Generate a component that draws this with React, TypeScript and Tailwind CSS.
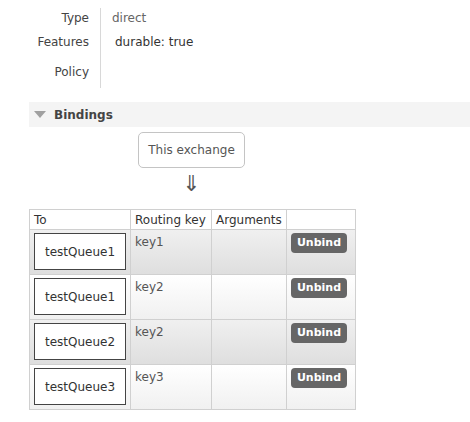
import { Fragment } from "react";

const props = [
  { label: "Type", value: "direct", h: "h-[20px]" },
  { label: "Features", value: "durable: true", h: "h-[28px]", indent: true },
  { label: "Policy", value: "", h: "h-[32px]" },
];

const bindings = [
  { queue: "testQueue1", key: "key1" },
  { queue: "testQueue1", key: "key2" },
  { queue: "testQueue2", key: "key2" },
  { queue: "testQueue3", key: "key3" },
];

const App = () => {
  return (
    <main className="w-[470px] h-[422px] overflow-hidden bg-white text-[12px] text-[#484848] font-['DejaVu_Sans',Verdana,sans-serif]">
      {/* exchange details */}
      <div className="grid grid-cols-[101px_1fr] mt-[8px] w-[300px]">
        {props.map((p) => (
          <Fragment key={p.label}>
            <div
              className={`${p.h} flex items-center justify-end pr-[11px] border-r border-[#d8d8d8] text-[#444]`}
            >
              {p.label}
            </div>
            <div className={`${p.h} flex items-center ${p.indent ? "pl-[14px] text-[#333]" : "pl-[11px] text-[#666]"}`}>
              {p.value}
            </div>
          </Fragment>
        ))}
      </div>

      {/* section header */}
      <div className="ml-[29px] mt-[14px] h-[25px] flex items-center bg-[#f4f4f4]">
        <svg width="12" height="7" viewBox="0 0 12 7" className="ml-[5px]">
          <path d="M0 0 L12 0 L6 7 Z" fill="#a0a0a0" />
        </svg>
        <span className="ml-[8px] font-bold text-[12px] text-[#444]">Bindings</span>
      </div>

      <div className="ml-[138px] mt-[5px] flex flex-col items-center w-[107px]">
        <div className="w-[107px] h-[36px] flex items-center justify-center border border-[#c4c4c4] rounded-[5px] text-[#555]">
          This exchange
        </div>
        <div className="h-[24px] leading-[24px] mt-[4px] text-[22px] text-[#555]">⇓</div>
      </div>

      <table className="ml-[29px] mt-[13px] border-collapse table-fixed w-[326px]">
        <thead>
          <tr className="h-[20px] text-left">
            <th className="w-[101px] font-normal border border-[#d0d0d0] px-[4px] text-[#333]">To</th>
            <th className="w-[81px] font-normal border border-[#d0d0d0] px-[4px] text-[#333]">Routing key</th>
            <th className="w-[75px] font-normal border border-[#d0d0d0] px-[4px] text-[#333]">Arguments</th>
            <th className="w-[69px] font-normal border border-[#d0d0d0]"></th>
          </tr>
        </thead>
        <tbody>
          {bindings.map((b, i) => (
            <tr
              key={i}
              className={`h-[45px] align-top ${
                i % 2 === 0
                  ? "bg-gradient-to-b from-[#f0f0f0] to-[#dedede]"
                  : "bg-gradient-to-b from-[#ffffff] to-[#f0f0f0]"
              }`}
            >
              <td className="border border-[#d0d0d0] pl-[4px] pt-[3px]">
                <div className="w-[92px] h-[37px] flex items-center justify-center border border-[#444] bg-white text-[#333]">
                  {b.queue}
                </div>
              </td>
              <td className="border border-[#d0d0d0] px-[4px] pt-[3px] text-[#555]">{b.key}</td>
              <td className="border border-[#d0d0d0]"></td>
              <td className="border border-[#d0d0d0] pl-[4px] pt-[3px]">
                <button className="w-[56px] h-[20px] rounded-[4px] bg-[#666] text-white font-bold text-[11px]">
                  Unbind
                </button>
              </td>
            </tr>
          ))}
        </tbody>
      </table>
    </main>
  );
};

export default App;
